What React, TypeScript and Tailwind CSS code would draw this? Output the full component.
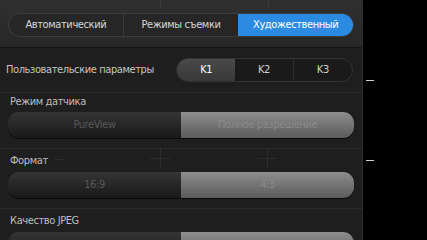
const font = { fontFamily: '"DejaVu Sans Condensed", "DejaVu Sans", sans-serif' };

function Slider({ left, right }: { left: string; right: string }) {
  return (
    <div className="mx-2 flex h-[26px] overflow-hidden rounded-[11px] shadow-[0_1px_0_#0a0a0a]">
      <div className="flex flex-1 items-center justify-center bg-gradient-to-b from-[#353535] to-[#191919] text-[11px] text-[#575757]">
        {left}
      </div>
      <div className="flex flex-1 items-center justify-center bg-gradient-to-b from-[#8e8e8e] to-[#5b5b5b] text-[11px] text-[#8a8a8a]">
        {right}
      </div>
    </div>
  );
}

function Section({ label, left, right, pt, gap }: { label: string; left: string; right: string; pt: string; gap: string }) {
  return (
    <div className={`flex flex-col border-t border-t-[#2a2a2a] ${pt}`}>
      <div className="px-[10px] text-[11px] leading-[14px] text-[#bdbdbd]">{label}</div>
      <div className={`${gap} pb-[10px]`}>
        <Slider left={left} right={right} />
      </div>
    </div>
  );
}

export default function App() {
  return (
    <div className="flex h-[240px] w-[427px] overflow-hidden bg-black tracking-[-0.4px]" style={font}>
      <div className="flex w-[363px] shrink-0 flex-col border-r border-r-[#2e2e2e] bg-[#1e1e1e]">
        {/* Верхний переключатель режимов */}
        <div className="relative h-[47px] shrink-0 bg-gradient-to-b from-[#303030] to-[#272727] px-2 pt-[13px]">
          <span className="absolute left-[160px] top-0 h-[8px] w-px bg-[#3c3c3c]" />
          <span className="absolute left-[268px] top-0 h-[8px] w-px bg-[#3c3c3c]" />
          <div className="grid h-[24px] w-[346px] grid-cols-3 overflow-hidden rounded-full border border-[#3d3d3d] bg-[#262626] text-[11px]">
            <div className="flex items-center justify-center border-r border-r-[#3a3a3a] text-[#d6d6d6]">Автоматический</div>
            <div className="flex items-center justify-center text-[#d6d6d6]">Режимы съемки</div>
            <div className="flex items-center justify-center bg-[#2b8be3] text-white">Художественный</div>
          </div>
        </div>

        {/* Пользовательские параметры */}
        <div className="flex h-[45px] shrink-0 items-center justify-between border-t border-t-[#151515] pl-[6px] pr-[9px]">
          <span className="text-[11px] text-[#c4c4c4]">Пользовательские параметры</span>
          <div className="grid h-[24px] w-[177px] grid-cols-3 overflow-hidden rounded-full border border-[#333] bg-[#1a1a1a] text-[11px] text-[#d0d0d0]">
            <div className="flex items-center justify-center bg-gradient-to-b from-[#4a4a4a] to-[#383838] text-white">K1</div>
            <div className="flex items-center justify-center border-r border-r-[#2c2c2c]">K2</div>
            <div className="flex items-center justify-center">K3</div>
          </div>
        </div>

        <Section label="Режим датчика" left="PureView" right="Полное разрешение" pt="pt-[2px]" gap="pt-[3px]" />
        <div className="relative">
          <span className="absolute left-[150px] top-[10px] h-px w-[20px] bg-[#2c2c2c]" />
          <span className="absolute left-[160px] top-0 h-[20px] w-px bg-[#2c2c2c]" />
          <span className="absolute left-[257px] top-[10px] h-px w-[20px] bg-[#2c2c2c]" />
          <span className="absolute left-[267px] top-0 h-[20px] w-px bg-[#2c2c2c]" />
          <span className="absolute left-[55px] top-[11px] h-px w-[8px] bg-[#2c2c2c]" />
          <Section label="Формат" left="16:9" right="4:3" pt="pt-[5px]" gap="pt-[4px]" />
        </div>
        <Section label="Качество JPEG" left="" right="" pt="pt-[5px]" gap="pt-[4px]" />
      </div>
      <div className="relative flex-1">
        <span className="absolute left-[3px] top-[80px] h-px w-[8px] bg-[#cfcfcf]" />
        <span className="absolute left-[3px] top-[160px] h-px w-[8px] bg-[#cfcfcf]" />
      </div>
    </div>
  );
}
